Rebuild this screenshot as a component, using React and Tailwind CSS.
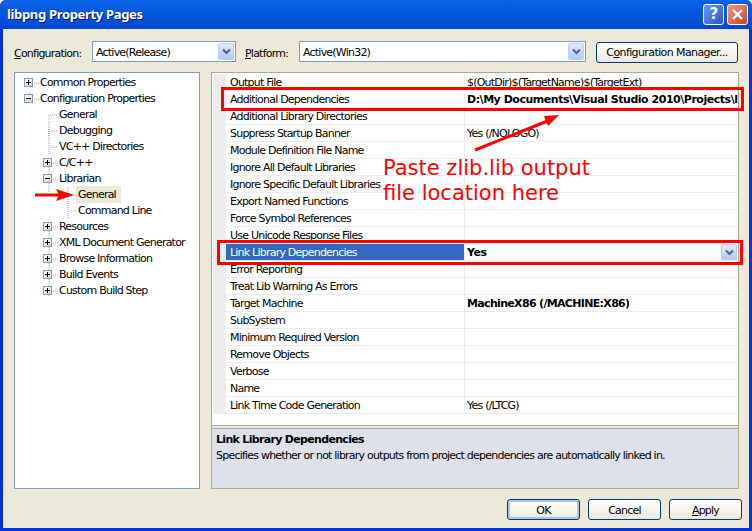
const RED = '#ff0000';

const TREE = [
  { label: 'Common Properties', level: 0, box: '+' },
  { label: 'Configuration Properties', level: 0, box: '-' },
  { label: 'General', level: 1 },
  { label: 'Debugging', level: 1 },
  { label: 'VC++ Directories', level: 1 },
  { label: 'C/C++', level: 1, box: '+' },
  { label: 'Librarian', level: 1, box: '-' },
  { label: 'General', level: 2, selected: true },
  { label: 'Command Line', level: 2 },
  { label: 'Resources', level: 1, box: '+' },
  { label: 'XML Document Generator', level: 1, box: '+' },
  { label: 'Browse Information', level: 1, box: '+' },
  { label: 'Build Events', level: 1, box: '+' },
  { label: 'Custom Build Step', level: 1, box: '+' },
];

const ROWS = [
  ['Output File', '$(OutDir)$(TargetName)$(TargetExt)'],
  ['Additional Dependencies', 'D:\\My Documents\\Visual Studio 2010\\Projects\\libpng', true],
  ['Additional Library Directories', ''],
  ['Suppress Startup Banner', 'Yes (/NOLOGO)'],
  ['Module Definition File Name', ''],
  ['Ignore All Default Libraries', ''],
  ['Ignore Specific Default Libraries', ''],
  ['Export Named Functions', ''],
  ['Force Symbol References', ''],
  ['Use Unicode Response Files', ''],
  ['Link Library Dependencies', 'Yes', true, true],
  ['Error Reporting', ''],
  ['Treat Lib Warning As Errors', ''],
  ['Target Machine', 'MachineX86 (/MACHINE:X86)', true],
  ['SubSystem', ''],
  ['Minimum Required Version', ''],
  ['Remove Objects', ''],
  ['Verbose', ''],
  ['Name', ''],
  ['Link Time Code Generation', 'Yes (/LTCG)'],
];

function Chevron() {
  return (
    <svg width="9" height="7" viewBox="0 0 9 7">
      <path d="M1 1.5 L4.5 5 L8 1.5" fill="none" stroke="#4d6185" strokeWidth="2" />
    </svg>
  );
}

function ComboArrow() {
  return (
    <span className="flex h-[17px] w-[16px] items-center justify-center rounded-[2px] bg-gradient-to-b from-[#e1eafe] to-[#aec8f7] border border-[#bccdf5]">
      <Chevron />
    </span>
  );
}

function Combo({ text, className }) {
  return (
    <div className={`flex h-[21px] items-center justify-between border border-[#7f9db9] bg-white pl-[3px] pr-[1px] ${className}`}>
      <span className="pt-[3px]">{text}</span>
      <ComboArrow />
    </div>
  );
}

function Button({ children, focused, className }) {
  return (
    <button className={`flex items-center justify-center rounded-[3px] border border-[#003c74] bg-gradient-to-b from-white to-[#ece9e0] pt-[3px] ${focused ? 'shadow-[inset_0_0_0_2px_#a9c4f0]' : ''} ${className}`}>
      {children}
    </button>
  );
}

function TreeBox({ kind }) {
  return (
    <span className="relative z-10 flex h-[9px] w-[9px] items-center justify-center border border-[#7b9ebd] bg-gradient-to-br from-white to-[#d8d3c4]">
      <span className="absolute h-[1px] w-[5px] bg-black" />
      {kind === '+' && <span className="absolute h-[5px] w-[1px] bg-black" />}
    </span>
  );
}

function TreeLines() {
  // dotted guides of the tree
  const dots = 'M29 20v9 M48 56v8 M48 88v32 M48 152v72 M33 10h5 M33 26h5 M48 42v40 M49 42h8 M49 58h8 M49 74h8 M52 90h5 M52 106h5 M67 114v32 M68 122h8 M68 138h8 M52 154h5 M52 170h5 M52 186h5 M52 202h5 M52 218h5';
  return (
    <svg className="absolute left-0 top-0" width="100" height="240">
      <path d={dots} transform="translate(-14 0)" stroke="#a0a0a0" strokeWidth="1" strokeDasharray="1 1" fill="none" />
    </svg>
  );
}

function TreeRow({ row }) {
  const pad = { 0: 'pl-[9px]', 1: 'pl-[28px]', 2: 'pl-[47px]' }[row.level];
  return (
    <div className={`flex h-[16px] items-center ${pad}`}>
      <span className="flex w-[15px] shrink-0 items-center">{row.box && <TreeBox kind={row.box} />}</span>
      <span className={`px-[1px] pt-[1px] leading-[16px] ${row.selected ? 'bg-[#ece9d8] pr-[5px] -ml-[1px] pl-[2px]' : ''}`}>{row.label}</span>
    </div>
  );
}

function GridRow({ name, value, bold, active }) {
  const tight = value.startsWith('Machine') ? 'tracking-[-0.67px]' : 'tracking-[-0.47px]';
  return (
    <div className="flex h-[17px] border-b border-[#ececec]">
      <div className="w-[13px] shrink-0 bg-[#ececec]" />
      <div className={`w-[239px] shrink-0 border-r border-[#ececec] pl-[4px] leading-[18px] ${active ? 'bg-[#316ac5] text-white' : ''}`}>{name}</div>
      <div className={`flex min-w-0 flex-1 justify-between overflow-hidden whitespace-nowrap pl-[2px] leading-[18px] ${bold ? `font-bold ${tight}` : ''}`}>
        <span className="overflow-hidden">{value}</span>
        {active && <span className="shrink-0 pr-[1px]"><ComboArrow /></span>}
      </div>
    </div>
  );
}

function Annotations() {
  return (
    <>
      <div className="absolute left-[221px] top-[87px] h-[24px] w-[523px] border-[3px] border-[#ff0000]" />
      <div className="absolute left-[217px] top-[240px] h-[25px] w-[526px] border-[3px] border-[#ff0000]" />
      <svg className="absolute left-0 top-0" width="752" height="531">
        <path d="M475 150 L550 120" stroke={RED} strokeWidth="3" fill="none" />
        <path d="M559 115 L544 116 L548 126 Z" fill={RED} />
        <path d="M35 195 L60 195" stroke={RED} strokeWidth="3" fill="none" />
        <path d="M74 195 L56 189 L59 195 L56 201 Z" fill={RED} />
      </svg>
      <div className="absolute left-[383px] top-[156px] text-[21px] leading-[25px] tracking-normal text-[#ff0000]">
        Paste zlib.lib output<br />file location here
      </div>
    </>
  );
}

export default function App() {
  return (
    <div className="relative flex h-[531px] w-[752px] flex-col overflow-hidden rounded-t-[6px] bg-[#0831d9] font-['DejaVu_Sans',sans-serif] text-[11px] tracking-[-0.78px] text-black">
      <div className="flex h-[29px] shrink-0 items-center justify-between bg-gradient-to-b from-[#0a62e6] via-[#0257dd] to-[#0347d0] pl-[7px] pr-[4px]">
        <span className="font-['Noto_Sans',sans-serif] text-[13px] font-bold tracking-[-0.33px] text-white [text-shadow:1px_1px_#0f1089]">libpng Property Pages</span>
        <div className="flex gap-[3px]">
          <span className="flex h-[21px] w-[21px] items-center justify-center rounded-[3px] border border-white bg-gradient-to-br from-[#6f96ee] to-[#2a55d2] text-[15px] font-bold text-white">?</span>
          <span className="flex h-[21px] w-[21px] items-center justify-center rounded-[3px] border border-white bg-gradient-to-br from-[#ea9b7e] to-[#c9411a]">
            <svg width="13" height="13" viewBox="0 0 13 13">
              <path d="M2 2 L11 11 M11 2 L2 11" stroke="white" strokeWidth="2.4" />
            </svg>
          </span>
        </div>
      </div>

      <div className="mx-[3px] mb-[3px] flex min-h-0 flex-1 flex-col bg-[#ece9d8] pl-[11px] pr-[10px] pt-[12px]">
        <div className="flex h-[21px] items-center">
          <span className="w-[78px] pt-[5px]"><u>C</u>onfiguration:</span>
          <Combo text="Active(Release)" className="w-[144px]" />
          <span className="ml-[9px] w-[54px] pt-[5px]"><u>P</u>latform:</span>
          <Combo text="Active(Win32)" className="w-[287px]" />
          <Button className="ml-[10px] mt-[1px] h-[21px] w-[142px] tracking-[-0.6px]">C<u>o</u>nfiguration Manager...</Button>
        </div>

        <div className="mt-[10px] flex h-[417px] gap-[11px]">
          <div className="relative h-full w-[186px] shrink-0 border border-[#7f9db9] bg-white pt-[1px]">
            <TreeLines />
            <div className="relative">
              {TREE.map((r, i) => <TreeRow key={i} row={r} />)}
            </div>
          </div>

          <div className="flex h-full min-w-0 flex-1 flex-col border border-[#aca899] bg-white">
            <div className="h-[352px] shrink-0 pt-[1px] pl-[1px]">
              {ROWS.map((r) => <GridRow key={r[0]} name={r[0]} value={r[1]} bold={r[2]} active={r[3]} />)}
            </div>
            <div className="h-[4px] border-y border-[#aca899] bg-[#ece9d8]" />
            <div className="flex-1 bg-[#dee1e9] pl-[4px] pt-[2px]">
              <div className="font-bold leading-[18px] tracking-[-0.68px]">Link Library Dependencies</div>
              <div className="leading-[14px]">Specifies whether or not library outputs from project dependencies are automatically linked in.</div>
            </div>
          </div>
        </div>

        <div className="-mr-[3px] mt-[10px] flex justify-end gap-[8px]">
          <Button focused className="h-[21px] w-[73px]">OK</Button>
          <Button className="h-[21px] w-[73px]">Cancel</Button>
          <Button className="h-[21px] w-[73px]"><u>A</u>pply</Button>
        </div>
      </div>

      <Annotations />
    </div>
  );
}
